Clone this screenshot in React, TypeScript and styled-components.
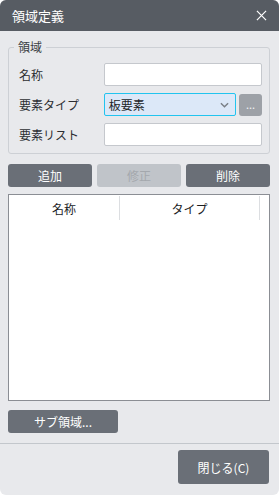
import styled, { createGlobalStyle } from 'styled-components';

const GlobalStyle = createGlobalStyle`
  html, body {
    margin: 0;
    padding: 0;
    background: #ffffff;
  }
  body {
    font-family: 'Noto Sans CJK JP', 'Noto Sans', sans-serif;
  }
`;

const App = () => {
  return (
    <>
      <GlobalStyle />
      <Window>
        <TitleBar>
          <Title>領域定義</Title>
          <CloseIcon viewBox="0 0 12 12">
            <path d="M1 1 L11 11 M11 1 L1 11" stroke="#ffffff" strokeWidth="1.3" />
          </CloseIcon>
        </TitleBar>
        <Body>
          <Group>
            <Legend>領域</Legend>
            <FieldRow>
              <Label>名称</Label>
              <TextInput />
            </FieldRow>
            <FieldRow>
              <Label>要素タイプ</Label>
              <SelectBox>
                <span>板要素</span>
                <Chevron viewBox="0 0 10 6">
                  <path d="M1 1 L5 5 L9 1" stroke="#7a7f86" strokeWidth="1.6" fill="none" />
                </Chevron>
              </SelectBox>
              <DotsButton>...</DotsButton>
            </FieldRow>
            <FieldRow>
              <Label>要素リスト</Label>
              <TextInput />
            </FieldRow>
          </Group>
          <ButtonRow>
            <ActionButton>追加</ActionButton>
            <ActionButton disabled>修正</ActionButton>
            <ActionButton>削除</ActionButton>
          </ButtonRow>
          <Table>
            <HeaderRow>
              <HeaderCell $width={110}>名称</HeaderCell>
              <HeaderCell $width={139}>タイプ</HeaderCell>
            </HeaderRow>
          </Table>
          <SubButton>サブ領域...</SubButton>
        </Body>
        <Footer>
          <CloseButton>閉じる(C)</CloseButton>
        </Footer>
      </Window>
    </>
  );
};

export default App;

const Window = styled.div`
  width: 279px;
  height: 495px;
  display: flex;
  flex-direction: column;
  background: #e8e9ec;
  border-radius: 6px;
  overflow: hidden;
`;

const TitleBar = styled.div`
  height: 31px;
  flex-shrink: 0;
  display: flex;
  align-items: center;
  justify-content: space-between;
  padding: 0 12px 0 12px;
  background: #575c63;
`;

const Title = styled.div`
  color: #ffffff;
  font-size: 13px;
`;

const CloseIcon = styled.svg`
  width: 11px;
  height: 11px;
`;

const Body = styled.div`
  flex: 1;
  display: flex;
  flex-direction: column;
  padding: 16px 9px 0 8px;
`;

const Group = styled.div`
  position: relative;
  border: 1px solid #cdd0d5;
  border-radius: 3px;
  padding: 15px 7px 7px 10px;
  display: flex;
  flex-direction: column;
  gap: 7px;
`;

const Legend = styled.div`
  position: absolute;
  top: -9px;
  left: 5px;
  padding: 0 4px;
  background: #e8e9ec;
  color: #3c3f44;
  font-size: 12px;
  line-height: 16px;
`;

const FieldRow = styled.div`
  display: flex;
  align-items: center;
  height: 23px;
`;

const Label = styled.div`
  width: 85px;
  color: #2c2e32;
  font-size: 12px;
`;

const TextInput = styled.div`
  width: 156px;
  height: 21px;
  background: #ffffff;
  border: 1px solid #c5c8cd;
  border-radius: 2px;
`;

const SelectBox = styled.div`
  width: 121px;
  height: 21px;
  display: flex;
  align-items: center;
  justify-content: space-between;
  padding: 0 6px 0 4px;
  margin-right: 3px;
  background: #dce8f8;
  border: 1px solid #22c4ef;
  border-radius: 2px;
  color: #222427;
  font-size: 12px;
`;

const Chevron = styled.svg`
  width: 9px;
  height: 6px;
`;

const DotsButton = styled.div`
  width: 23px;
  height: 22px;
  border-radius: 3px;
  background: #9da1a7;
  color: #f0f1f3;
  font-size: 11px;
  display: flex;
  align-items: center;
  justify-content: center;
  line-height: 1;
`;

const ButtonRow = styled.div`
  display: grid;
  grid-template-columns: 84px 84px 84px;
  justify-content: space-between;
  margin-top: 10px;
`;

const ActionButton = styled.div<{ disabled?: boolean }>`
  height: 23px;
  border-radius: 3px;
  display: flex;
  align-items: center;
  justify-content: center;
  font-size: 12px;
  background: ${p => (p.disabled ? '#c0c4c9' : '#6a6f77')};
  color: ${p => (p.disabled ? '#a4a8ad' : '#ffffff')};
`;

const Table = styled.div`
  margin-top: 7px;
  height: 205px;
  background: #ffffff;
  border: 1px solid #8b8e94;
`;

const HeaderRow = styled.div`
  display: flex;
  padding-top: 1px;
  height: 24px;
`;

const HeaderCell = styled.div<{ $width: number }>`
  width: ${p => p.$width}px;
  display: flex;
  align-items: center;
  justify-content: center;
  border-right: 1px solid #dcdee1;
  font-size: 12px;
  color: #1c1d1f;
`;

const SubButton = styled.div`
  width: 110px;
  height: 23px;
  margin-top: 9px;
  border-radius: 3px;
  background: #6a6f77;
  color: #ffffff;
  font-size: 12px;
  display: flex;
  align-items: center;
  justify-content: center;
`;

const Footer = styled.div`
  height: 50px;
  flex-shrink: 0;
  margin-top: 10px;
  border-top: 1px solid #c3c7cc;
  display: flex;
  justify-content: flex-end;
  padding: 6px 10px 0 0;
`;

const CloseButton = styled.div`
  width: 91px;
  height: 34px;
  border-radius: 3px;
  background: #6a6f77;
  color: #ffffff;
  font-size: 12px;
  display: flex;
  align-items: center;
  justify-content: center;
`;
